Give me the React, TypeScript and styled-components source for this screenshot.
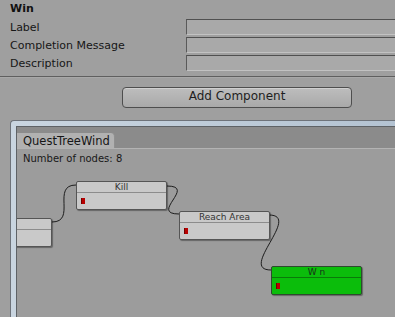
import React from "react";
import styled, { createGlobalStyle } from "styled-components";

const GlobalStyle = createGlobalStyle`
  html, body {
    margin: 0;
    padding: 0;
    background: #9f9f9f;
    overflow: hidden;
    font-family: "DejaVu Sans", "Liberation Sans", sans-serif;
  }
  #root { width: 395px; height: 317px; overflow: hidden; }
`;

const Page = styled.div`
  width: 395px;
  height: 317px;
  display: flex;
  flex-direction: column;
  background: #9f9f9f;
  overflow: hidden;
`;

const Inspector = styled.div`
  display: flex;
  flex-direction: column;
  padding: 1px 0 0 10px;
`;

const Title = styled.div`
  height: 17px;
  line-height: 15px;
  font-size: 11px;
  font-weight: bold;
  color: #111;
`;

const FieldRow = styled.div`
  display: grid;
  grid-template-columns: 176px 1fr;
  align-items: center;
  height: 18px;
`;

const FieldLabel = styled.div`
  font-size: 11px;
  color: #161616;
  white-space: nowrap;
`;

const TextField = styled.div`
  height: 14px;
  margin-right: -40px;
  background: #a9a9a9;
  border-top: 1px solid #505050;
  border-left: 1px solid #5a5a5a;
  border-bottom: 1px solid #c2c2c2;
`;

const Divider = styled.div`
  margin-top: 4px;
  height: 1px;
  background: #5f5f5f;
  border-bottom: 1px solid #a8a8a8;
`;

const ButtonRow = styled.div`
  display: flex;
  padding: 9px 0 0 122px;
`;

const Button = styled.button`
  width: 230px;
  height: 21px;
  border: 1px solid #4e4e4e;
  border-radius: 4px;
  background: linear-gradient(#bdbdbd, #a9a9a9);
  font-family: "DejaVu Sans", "Liberation Sans", sans-serif;
  font-size: 12px;
  line-height: 17px;
  color: #1e1e1e;
  padding: 0 0 2px 0;
  box-shadow: inset 0 1px 0 #cfcfcf;
`;

const Frame = styled.div`
  margin: 12px 0 0 10px;
  flex: 1;
  display: flex;
  border-top: 1px solid #6e737a;
  border-left: 1px solid #6e737a;
  border-top-left-radius: 4px;
  padding: 5px 0 0 5px;
  background: linear-gradient(90deg, #c9d5e0, #b4c3d2);
`;

const Window = styled.div`
  flex: 1;
  display: flex;
  flex-direction: column;
  border-top: 1px solid #5e6266;
  border-left: 1px solid #5e6266;
  background: #9c9c9c;
`;

const TabBar = styled.div`
  height: 21px;
  display: flex;
  align-items: flex-end;
  background: #8b8b8b;
  border-bottom: 1px solid #b3b3b3;
`;

const Tab = styled.div`
  height: 15px;
  width: 98px;
  padding-left: 6px;
  box-sizing: border-box;
  display: flex;
  align-items: center;
  background: #b1b1b1;
  border-top-right-radius: 4px;
  border-right: 1px solid #8f8f8f;
  font-size: 11.5px;
  color: #161616;
`;

const Canvas = styled.div`
  position: relative;
  flex: 1;
  overflow: hidden;
`;

const NodeCount = styled.div`
  padding: 4px 0 0 6px;
  font-size: 10px;
  color: #181818;
`;

const Wires = styled.svg`
  position: absolute;
  left: 0;
  top: 0;
`;

const Node = styled.div<{ $green?: boolean }>`
  position: absolute;
  width: 91px;
  height: 29px;
  box-sizing: border-box;
  display: flex;
  flex-direction: column;
  border: 1px solid ${(p) => (p.$green ? "#2e4a2e" : "#555")};
  border-radius: 2px;
  background: ${(p) => (p.$green ? "#0bbd0b" : "#c9c9c9")};
  box-shadow: 1px 1px 1px rgba(0, 0, 0, 0.35);
`;

const NodeHeader = styled.div<{ $green?: boolean }>`
  height: 10px;
  line-height: 10px;
  text-align: center;
  font-size: 9px;
  color: ${(p) => (p.$green ? "#1a301a" : "#333")};
  border-bottom: 1px solid ${(p) => (p.$green ? "#0a7a0a" : "#8c8c8c")};
  white-space: nowrap;
`;

const NodeBody = styled.div`
  flex: 1;
  padding: 5px 0 0 4px;
`;

const Pin = styled.span`
  display: block;
  width: 3px;
  height: 6px;
  background: #b80000;
  border-left: 1px solid #700000;
`;

const nodes = [
  { title: "", left: -56, top: 69, green: false, pin: false },
  { title: "Kill", left: 59, top: 32, green: false, pin: true },
  { title: "Reach Area", left: 162, top: 62, green: false, pin: true },
  { title: "W n", left: 254, top: 117, green: true, pin: true },
];

export default function App() {
  return (
    <Page>
      <GlobalStyle />
      <Inspector>
        <Title>Win</Title>
        <FieldRow>
          <FieldLabel>Label</FieldLabel>
          <TextField />
        </FieldRow>
        <FieldRow>
          <FieldLabel>Completion Message</FieldLabel>
          <TextField />
        </FieldRow>
        <FieldRow>
          <FieldLabel>Description</FieldLabel>
          <TextField />
        </FieldRow>
      </Inspector>
      <Divider />
      <ButtonRow>
        <Button>Add Component</Button>
      </ButtonRow>
      <Frame>
        <Window>
          <TabBar>
            <Tab>QuestTreeWind</Tab>
          </TabBar>
          <Canvas>
            <NodeCount>Number of nodes: 8</NodeCount>
            <Wires width="400" height="200">
              <g fill="none" stroke="#1c1c1c" strokeWidth="1">
                <path d="M35,73 C60,73 34,36 59,36" />
                <path d="M150,37 C180,37 132,65 162,65" />
                <path d="M252,66 C285,66 221,121 254,121" />
              </g>
            </Wires>
            {nodes.map((n, i) => (
              <Node key={i} $green={n.green} style={{ left: n.left, top: n.top }}>
                <NodeHeader $green={n.green}>{n.title}</NodeHeader>
                <NodeBody>{n.pin && <Pin />}</NodeBody>
              </Node>
            ))}
          </Canvas>
        </Window>
      </Frame>
    </Page>
  );
}
